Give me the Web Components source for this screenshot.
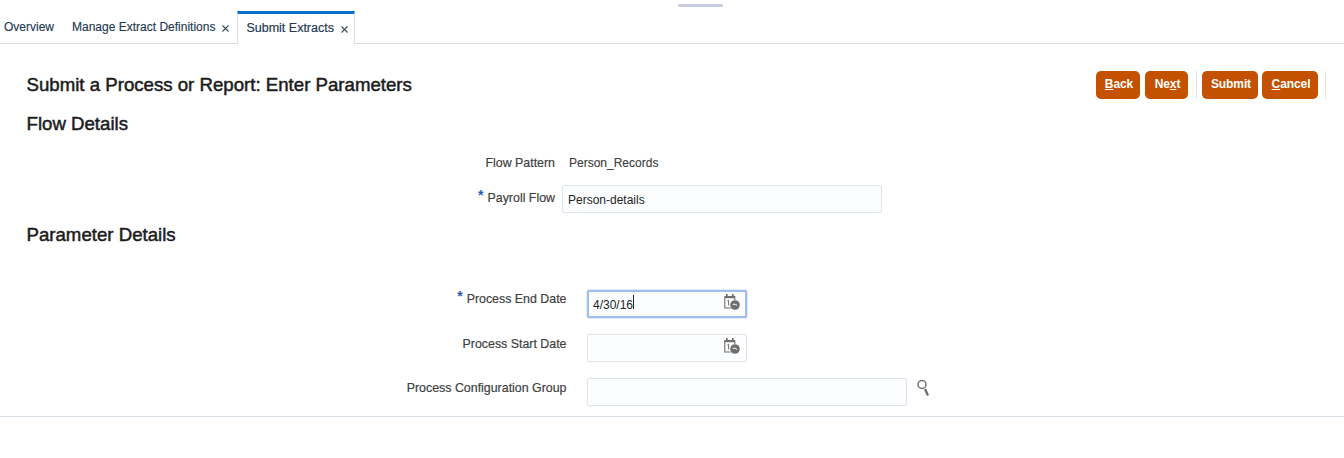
<!DOCTYPE html>
<html><head><meta charset="utf-8"><title>Submit Extracts</title>
<style>
html,body{margin:0;padding:0;background:#fff;height:458px;overflow:hidden}
body{font-family:"Liberation Sans",Arial,sans-serif;color:#333;font-size:12px}
</style></head><body>
<app-page></app-page>
<script>
const CAL=`<svg width="18" height="18" viewBox="0 0 18 18" aria-hidden="true"><path d="M1.800 5v10h6M11.800 5v2" fill="none" stroke="#6f6f6f" stroke-width="1.100"/><rect x="1.300" y="3" width="11" height="2.200" fill="#6f6f6f"/><rect x="3" y="1" width="1.700" height="3" fill="#6f6f6f"/><rect x="9" y="1" width="1.700" height="3" fill="#6f6f6f"/><path d="M4.300 8l1.300-.8V12.500" fill="none" stroke="#6f6f6f" stroke-width="1"/><circle cx="12" cy="12" r="4.800" fill="#6f6f6f"/><path d="M9.700 11.300h2.600l1.800 1.100" fill="none" stroke="#fff" stroke-width="1"/></svg>`;
const X=`<svg width="9" height="9" viewBox="0 0 9 9" aria-hidden="true"><path d="M1.500 1.500l6 6M7.500 1.500l-6 6" stroke="#3d4f5c" stroke-width="1.100" fill="none"/></svg>`;
function def(name,css,html){customElements.define(name,class extends HTMLElement{constructor(){super();this.attachShadow({mode:'open'})}connectedCallback(){if(this._d)return;this._d=1;this.shadowRoot.innerHTML=`<style>${css}</style>${typeof html==='function'?html(this):html}`}})}

def('tab-item',`:host{display:flex;align-items:center;box-sizing:border-box;height:33px;padding-top:1px;color:#1f3a52;white-space:nowrap;font-size:12px;-webkit-text-stroke:.15px}
:host([active]){border:1px solid #d6dfe6;border-top:3px solid #0572ce;border-bottom:0;background:#fff;margin-bottom:-1px;padding:0 5px 2px 8px;font-size:12.500px;-webkit-text-stroke:.2px}
svg{margin-left:6px;margin-top:2px;display:block}`,
 t=>`<slot></slot>${t.hasAttribute('closable')?X:''}`);

def('tab-bar',`:host{display:block;box-sizing:border-box;height:44px;border-bottom:1px solid #d6dfe6;position:relative}
.row{display:flex;align-items:flex-end;height:43px;padding-left:4px}
::slotted(tab-item:nth-child(1)){margin-right:18px}
::slotted(tab-item:nth-child(2)){margin-right:7px}
.handle{position:absolute;left:678px;top:4px;width:45px;height:3px;border-radius:2px;background:#c9cce0}`,
`<div class="handle"></div><div class="row"><slot></slot></div>`);

def('action-button',`:host{display:inline-flex;align-items:center;justify-content:center;box-sizing:border-box;height:28px;padding:0 0 3px 2px;background:#c45100;color:#fff;border-radius:5px;font-weight:bold;font-size:12px;white-space:nowrap;letter-spacing:-.1px}`,`<slot></slot>`);

def('toolbar-sep',`:host{display:block;width:1px;height:28px;background:#dfe4ea}`,``);

def('page-header',`:host{display:flex;align-items:flex-start;justify-content:space-between;padding:27px 18px 0 26.500px;height:43px;box-sizing:content-box}
h1{margin:4px 0 0;font-size:18.650px;line-height:20px;font-weight:normal;-webkit-text-stroke:.5px;color:#1c1c1c}
.tools{display:flex;align-items:center}`,t=>`<h1>${t.getAttribute('heading')}</h1><div class="tools"><slot></slot></div>`);

def('section-head',`:host{display:block;padding-left:26.500px;font-size:18.650px;line-height:20px;font-weight:normal;-webkit-text-stroke:.5px;color:#1c1c1c}`,`<slot></slot>`);

def('form-row',`:host{display:flex;align-items:flex-start;height:var(--row-h,44px)}
.label{box-sizing:border-box;width:var(--label-w);text-align:right;color:#3f3f3f;font-size:12.400px;line-height:16px;padding-top:var(--label-top,0px);white-space:nowrap;-webkit-text-stroke:.2px}
.star{color:#2a5db0;font-weight:bold;font-size:14px;line-height:12px;vertical-align:2px;margin-right:4px;-webkit-text-stroke:0}
.field{display:flex;align-items:flex-start;margin-left:var(--field-gap)}`,
t=>`<div class="label">${t.hasAttribute('required')?'<span class="star">*</span>':''}${t.getAttribute('label')}</div><div class="field"><slot></slot></div>`);

def('text-field',`:host{display:flex;align-items:center;box-sizing:border-box;height:28px;border:1px solid #dfe4ea;border-radius:2px;background:#fcfdfe;padding:0 5px;font-size:12px;color:#252525}
:host([focused]){border:2px solid #9dbdf3;padding:0 4px;box-shadow:0 0 0 .5px #c4d8f7}
.caret{display:inline-block;width:1px;height:14px;background:#222}
.val{flex:1;white-space:nowrap;padding-top:1px}
:host([focused]) .val{padding-top:0;padding-bottom:1px}
.ic{display:flex;margin-top:-4px}`,
t=>`<div class="val"><slot></slot>${t.hasAttribute('focused')?'<span class="caret"></span>':''}</div>${t.hasAttribute('date')?`<div class="ic">${CAL}</div>`:''}`);

def('search-icon',`:host{display:block;margin:2px 0 0 10px;width:14px;height:18px}`,
`<svg width="14" height="18" viewBox="0 0 14 18" aria-hidden="true"><circle cx="5" cy="4.500" r="4" fill="none" stroke="#6f6f6f" stroke-width="1.500"/><path d="M8 9l3 6.500" stroke="#6f6f6f" stroke-width="2.300"/></svg>`);

def('app-page',`:host{display:block}
.flow{--label-w:555px;--field-gap:7px;padding-top:16px}
.params{--label-w:566.500px;--field-gap:20.500px;padding-top:45px}
.fp{--row-h:35px;--label-top:5px}
.value{padding:5px 0 0 7px;line-height:16px;color:#3f3f3f;-webkit-text-stroke:.15px}
.rule{border-top:1px solid #d6dfe6}`,`<tab-bar><tab-item>Overview</tab-item><tab-item closable>Manage Extract Definitions</tab-item><tab-item active closable>Submit Extracts</tab-item></tab-bar>
<page-header heading="Submit a Process or Report: Enter Parameters">
<action-button style="width:44px;margin-right:5px"><u>B</u>ack</action-button><action-button style="width:43px;margin-right:8px">Ne<u>x</u>t</action-button><toolbar-sep style="margin-right:5px"></toolbar-sep><action-button style="width:56px;margin-right:4px">Submit</action-button><action-button style="width:56px;margin-right:7px"><u>C</u>ancel</action-button><toolbar-sep></toolbar-sep>
</page-header>
<section-head>Flow Details</section-head>
<div class="flow">
<form-row class="fp" label="Flow Pattern"><div class="value">Person_Records</div></form-row>
<form-row required label="Payroll Flow" style="--row-h:40px;--label-top:4px"><text-field style="width:320px">Person-details</text-field></form-row>
</div>
<section-head>Parameter Details</section-head>
<div class="params">
<form-row required label="Process End Date" style="--label-top:0px"><text-field focused date style="width:160px">4/30/16</text-field></form-row>
<form-row label="Process Start Date" style="--label-top:2px"><text-field date style="width:160px"></text-field></form-row>
<form-row label="Process Configuration Group" style="--label-top:2px;--row-h:38px"><text-field style="width:320px"></text-field><search-icon></search-icon></form-row>
</div>
<div class="rule"></div>`);
</script>
</body></html>
